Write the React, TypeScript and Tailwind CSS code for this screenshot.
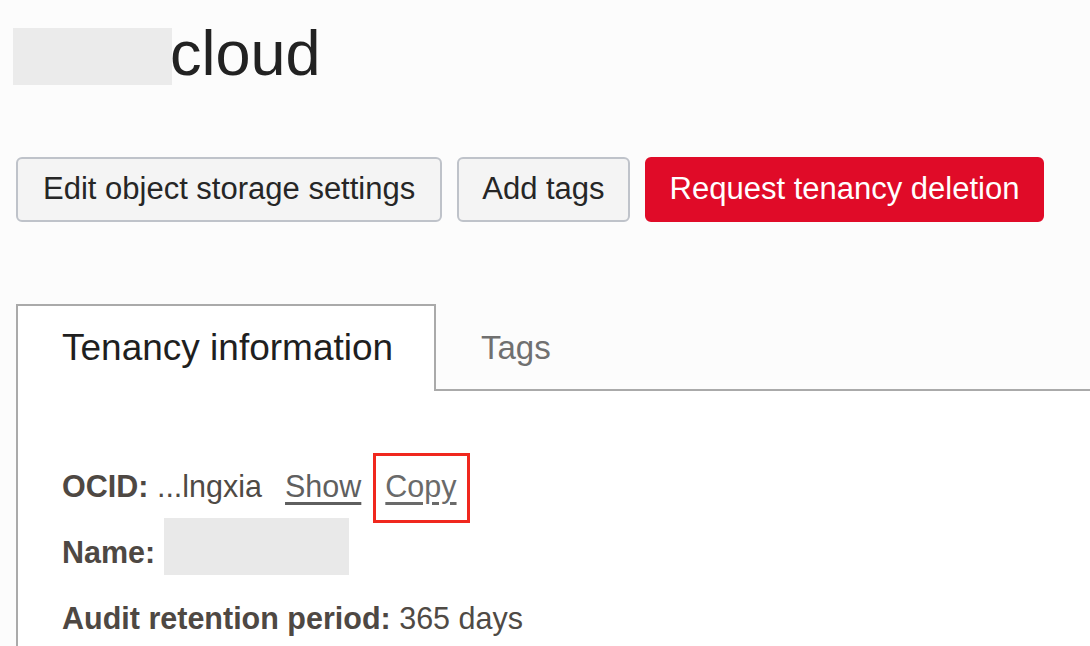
import React from "react";

const App = () => {
  return (
    <div
      className="h-screen w-full overflow-hidden bg-[#fcfcfc]"
      style={{ fontFamily: '"Liberation Sans", Arial, sans-serif' }}
    >
      {/* title */}
      <div className="flex items-start pt-[22px] pl-[13px]">
        <div className="mt-[6px] h-[57px] w-[159px] bg-[#ebebeb]" />
        <h1 className="-ml-[2px] text-[63px] leading-[62px] text-[#222222]">
          cloud
        </h1>
      </div>

      {/* actions */}
      <div className="mt-[72px] flex gap-[15px] pl-4">
        <button className="h-[65px] rounded-[6px] border-2 border-[#bfc3ca] bg-[#f4f4f4] px-[25px] text-[31px] text-[#262626]">
          Edit object storage settings
        </button>
        <button className="h-[65px] rounded-[6px] border-2 border-[#bfc3ca] bg-[#f4f4f4] px-[23px] text-[31px] text-[#262626]">
          Add tags
        </button>
        <button className="h-[65px] rounded-[6px] border-2 border-[#e00b28] bg-[#e00b28] px-[23px] text-[31px] text-white">
          Request tenancy deletion
        </button>
      </div>

      {/* tabs */}
      <div className="ml-4 mt-[82px]">
        <div className="flex">
          <div className="h-[87px] w-[420px] border-x-2 border-t-2 border-[#aaaaaa] bg-white pl-[44px] pt-[22px] text-[37px] leading-[40px] text-[#1f1f1f]">
            Tenancy information
          </div>
          <div className="h-[87px] flex-1 border-b-2 border-[#aaaaaa] pl-[45px] pt-[24px] text-[33px] leading-[40px] text-[#707070]">
            Tags
          </div>
        </div>

        <div className="h-[400px] border-l-2 border-[#aaaaaa] bg-white pl-[44px] pt-[62px] text-[30.5px] leading-[66px] text-[#4f4a45]">
          <div>
            <span className="font-bold text-[#4e4843]">OCID:</span>{" "}
            <span>...lngxia</span>
            <a className="ml-[23px] text-[#5f5f5f] underline underline-offset-[5px]">
              Show
            </a>
            <span className="relative ml-[24px]">
              <a className="text-[#6a6a6a] underline underline-offset-[5px]">Copy</a>
              <span className="pointer-events-none absolute -bottom-[20px] -left-[12px] -right-[13px] -top-[16px] border-[3px] border-[#f0281e]" />
            </span>
          </div>
          <div>
            <span className="font-bold text-[#4e4843]">Name:</span>{" "}
            <span className="-mt-[1px] inline-block h-[57px] w-[185px] bg-[#e9e9e9] align-top" />
          </div>
          <div>
            <span className="font-bold text-[#4e4843]">Audit retention period:</span>{" "}
            <span>365 days</span>
          </div>
        </div>
      </div>
    </div>
  );
};

export default App;
